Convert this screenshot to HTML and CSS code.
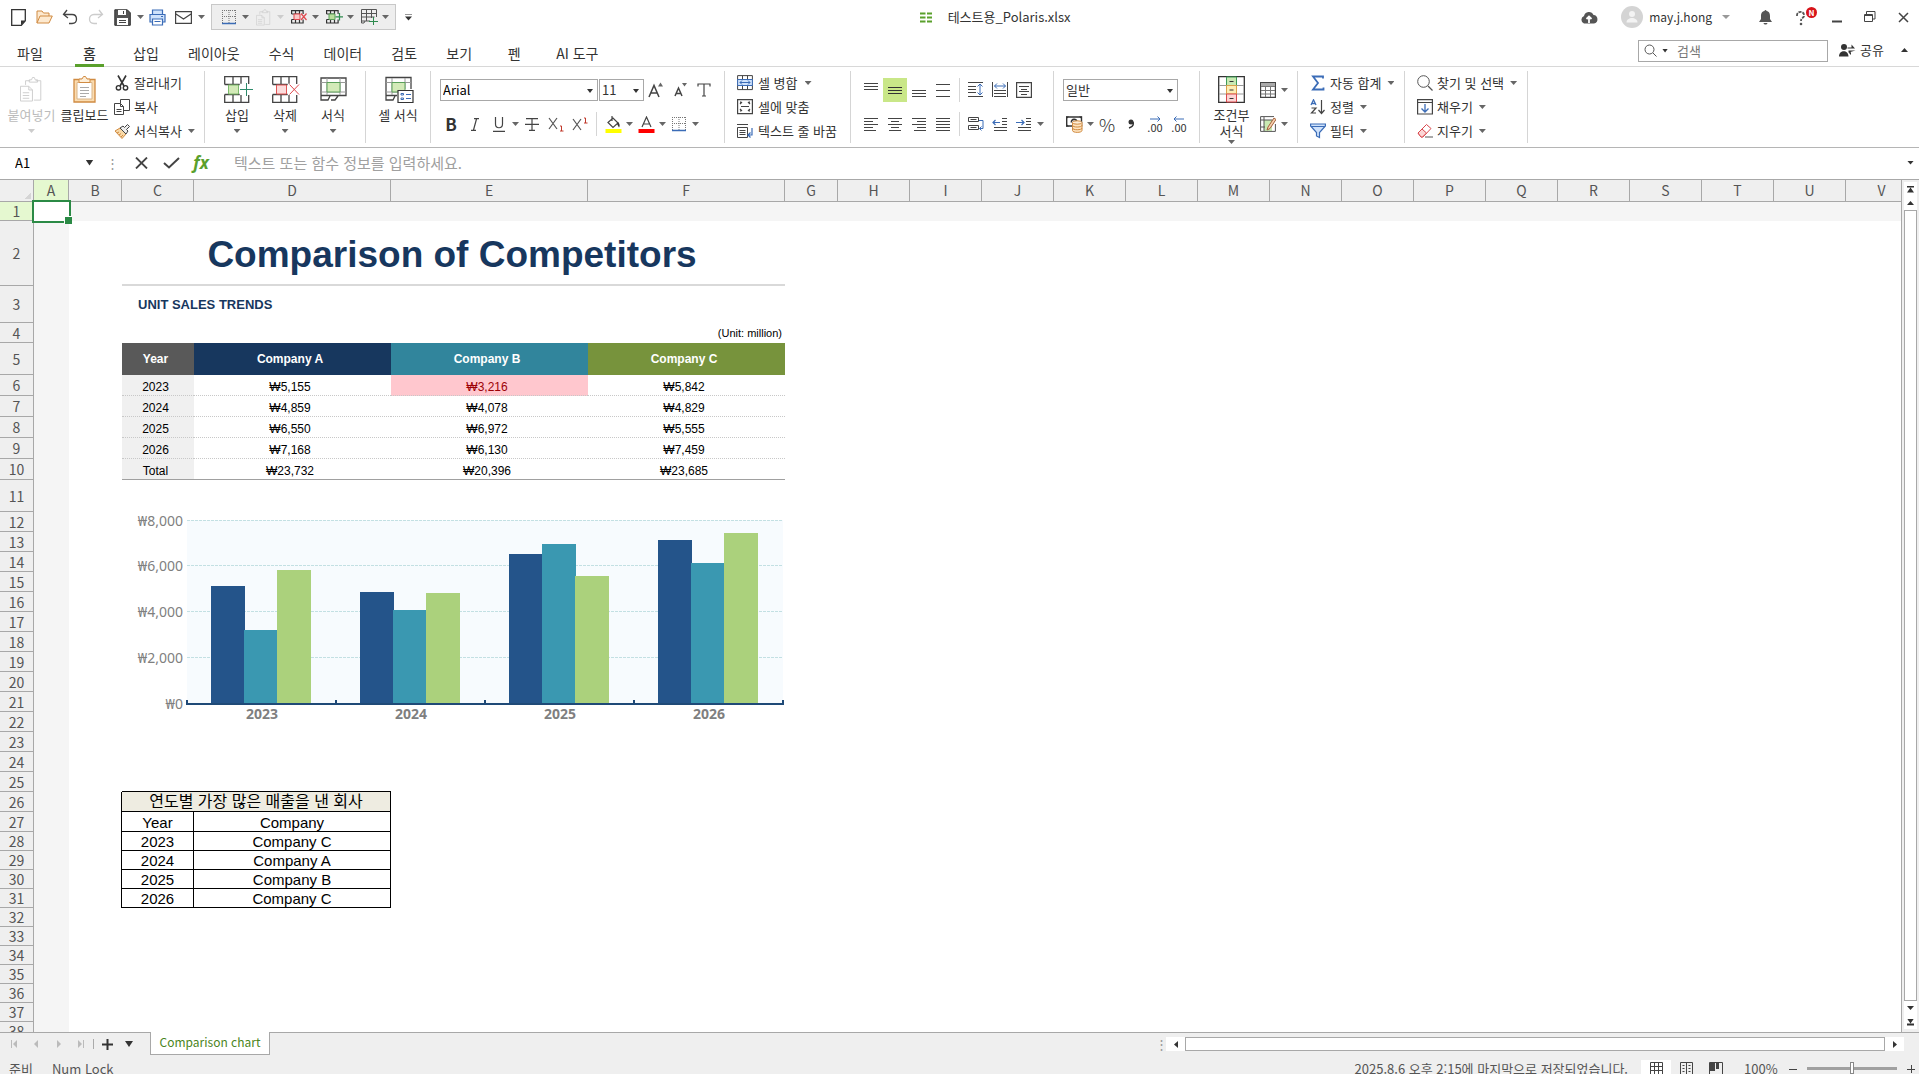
FILE: index.html
```html
<!DOCTYPE html>
<html lang="ko">
<head>
  <meta charset="UTF-8" />
  <meta name="viewport" content="width=device-width, initial-scale=1.0" />
  <title>테스트용_Polaris.xlsx</title>
  <link rel="stylesheet" href="styles.css">
</head>
<body>
  <!-- Shared icons -->
  <svg class="defs" aria-hidden="true">
    <symbol id="i-borders" viewBox="0 0 16 16">
      <path d="M1.5 1v13M8 1v13M14.5 1v13M1 1.5h14M1 7.5h14" stroke="#777" stroke-dasharray="1 1"/>
      <path d="M1 14.5h14" stroke="#3b6cb7" stroke-width="1.5"/>
    </symbol>
    <symbol id="i-paste" viewBox="0 0 26 28">
      <path d="M6 9V4.500h5M17 4.500h5.500v21H15M10 6V3.500h2.500l1-2.500h2l1 2.500H19V6z"/>
      <path d="M.5 10.500h9l4 4v12H.5zM9.500 10.500v4h4M3 17.500h7M3 20.500h7M3 23.500h7"/>
    </symbol>
    <symbol id="i-insert" viewBox="0 0 29 27">
      <path d="M.7 8.500V.7h24V8M.7 8.500h15M9 .7v7.800M17 .7v7M.7 18.500v7.800h24V19M.7 18.500h15M9 18.500v7.800M17 19v7.300" stroke="#444" stroke-width="1.300"/>
      <path d="M4.500 9h10v9h-10z" fill="#d3eab8" stroke="#7cba6b"/>
      <path d="M16 13.500h13M22.500 7v13" stroke="#2e8b6b"/>
    </symbol>
    <symbol id="i-delete" viewBox="0 0 29 27">
      <path d="M.7 8.500V.7h24V8M.7 8.500h15M9 .7v7.800M17 .7v7M.7 18.500v7.800h24V19M.7 18.500h15M9 18.500v7.800M17 19v7.300" stroke="#444" stroke-width="1.300"/>
      <path d="M4.500 9h10v9h-10z" fill="#fcdcdc" stroke="#e05555"/>
      <path d="M17.500 8.500l9.500 10M27 8.500l-9.500 10" stroke="#e0484d"/>
    </symbol>
    <symbol id="i-insert-s" viewBox="0 0 17 14">
      <path d="M.6 4V.6h11.500V4M.6 4h8M4.500.6V4M8.500.6V4M.6 9.500V13h11.500V9.500M.6 9.500h8M4.500 9.500V13M8.500 9.500V13" stroke="#333" stroke-width="1.200"/>
      <path d="M3 4h6v5.500H3z" fill="#b9dd9c" stroke="#5aa05a"/>
      <path d="M9.500 6.800H17M13.500 3v7.500" stroke="#2e8b4e" stroke-width="1.200"/>
    </symbol>
    <symbol id="i-delete-s" viewBox="0 0 17 14">
      <path d="M.6 4V.6h11.500V4M.6 4h8M4.500.6V4M8.500.6V4M.6 9.500V13h11.500V9.500M.6 9.500h8M4.500 9.500V13M8.500 9.500V13" stroke="#333" stroke-width="1.200"/>
      <path d="M3 4h6v5.500H3z" fill="#fcc8c8" stroke="#e0484d"/>
      <path d="M10 3.500l5.500 6.500M15.500 3.500L10 10" stroke="#e0484d" stroke-width="1.200"/>
    </symbol>
  </svg>

  <header class="titlebar">
    <div class="quick">
      <button class="tool" aria-label="새 문서"><svg width="15" height="17" viewBox="0 0 15 17"><path d="M.7.7h13.600v11l-4 4.600H.7z" stroke="#333" stroke-width="1.300"/><path d="M10 16v-4.500h4z" fill="#333"/></svg></button>
      <button class="tool" aria-label="열기"><svg width="17" height="14" viewBox="0 0 17 14"><path d="M1 13V1h5l1.500 2H13v3" fill="#fde9cf" stroke="#d08b42"/><path d="M1 13L4 6h12.300L13 13z" fill="#fde9cf" stroke="#d08b42"/></svg></button>
      <button class="tool" aria-label="실행 취소"><svg width="16" height="16" viewBox="0 0 16 16"><path d="M5 1L1.500 5.500 6 9M1.500 5.500H10c6 0 6 9 0 9H7" stroke="#444" stroke-width="1.300"/></svg></button>
      <button class="tool" aria-label="다시 실행"><svg width="16" height="16" viewBox="0 0 16 16"><path d="M11 1l3.500 4.500L10 9M14.500 5.500H6c-6 0-6 9 0 9h3" stroke="#ccc" stroke-width="1.300"/></svg></button>
      <button class="tool" aria-label="저장"><svg width="17" height="17" viewBox="0 0 17 17"><path d="M.8.8h12.500l3 3v12.500H.8z" fill="#555" stroke="#333"/><path d="M4 1h8v5H4zM3 9h11v7H3z" fill="#fff"/><path d="M9.500 2v3M5 11.500h7M5 13.500h7" stroke="#444"/></svg></button>
      <button class="drop" aria-label="저장 옵션"><i class="caret"></i></button>
      <button class="tool" aria-label="인쇄"><svg width="17" height="17" viewBox="0 0 17 17"><path d="M3.500 5V1h10v4M1 5.500h15v7.500H1z" fill="#cfe2fb" stroke="#3b6cb7" stroke-width="1.200"/><path d="M3.500 10h10v6h-10z" fill="#fff" stroke="#3b6cb7" stroke-width="1.200"/><path d="M5.500 12.500h6M12 7.500h2" stroke="#3b6cb7"/></svg></button>
      <button class="tool" aria-label="메일"><svg width="17" height="13" viewBox="0 0 17 13"><path d="M.6.6h15.800v11.800H.6zM1 3l7.500 5L16 3" stroke="#444" stroke-width="1.200"/></svg></button>
      <button class="drop" aria-label="메일 옵션"><i class="caret"></i></button>
      <div class="recent">
        <button class="tool" aria-label="테두리"><svg width="16" height="16"><use href="#i-borders"/></svg></button>
        <button class="drop" aria-label="테두리 옵션"><i class="caret"></i></button>
        <button class="tool" aria-label="붙여넣기" disabled><svg class="faint" width="16" height="17"><use href="#i-paste"/></svg></button>
        <button class="drop" aria-label="붙여넣기 옵션" disabled><i class="caret"></i></button>
        <button class="tool" aria-label="셀 삭제"><svg width="17" height="14"><use href="#i-delete-s"/></svg></button>
        <button class="drop" aria-label="셀 삭제 옵션"><i class="caret"></i></button>
        <button class="tool" aria-label="셀 삽입"><svg width="17" height="14"><use href="#i-insert-s"/></svg></button>
        <button class="drop" aria-label="셀 삽입 옵션"><i class="caret"></i></button>
        <button class="tool" aria-label="표"><svg width="17" height="16" viewBox="0 0 17 16"><path d="M9 12H.5V.5h15V8M.5 4.500h15M.5 8h13M5.500.5V12M10.500.5V9M4 12l-1 2H.5v-2" stroke="#555"/><path d="M8 12.500h9M12.500 8v8" stroke="#2e8b4e"/></svg></button>
        <button class="drop" aria-label="표 옵션"><i class="caret"></i></button>
      </div>
      <button class="drop custom" aria-label="도구 모음 사용자 지정"><i class="caret barred"></i></button>
    </div>
    <div class="doc">
      <svg width="12" height="11" viewBox="0 0 12 11"><path d="M0 1.500h5.500M7 1.500h5M0 5.500h5.500M7 5.500h5M0 9.500h5.500M7 9.500h5" stroke="#5aa02c" stroke-width="2"/></svg>
      <span>테스트용_Polaris.xlsx</span>
    </div>
    <div class="account">
      <button class="tool" aria-label="클라우드"><svg width="18" height="13" viewBox="0 0 18 13"><path d="M4 12.500a4 4 0 0 1 0-7.500A5 5 0 0 1 13.500 4a4.300 4.300 0 0 1 .5 8.500z" fill="#555"/><path d="M9 12V6M6.500 8L9 5.500 11.500 8" stroke="#fff" stroke-width="1.800"/></svg></button>
      <button class="user"><svg width="22" height="22" viewBox="0 0 22 22"><circle cx="11" cy="11" r="11" fill="#d4d4d4"/><circle cx="11" cy="8" r="3" fill="#f3f3f3"/><path d="M5.500 16.500c0-6 11-6 11 0z" fill="#f3f3f3"/></svg>may.j.hong<i class="caret pale"></i></button>
      <button class="tool" aria-label="알림"><svg width="13" height="15" viewBox="0 0 13 15"><path d="M6.500 0a1 1 0 0 1 1 1c3 .5 3.500 3 3.500 5v3l2 3H0l2-3V6c0-2 .5-4.500 3.500-5a1 1 0 0 1 1-1zM4.500 13h4c-.5 2-3.500 2-4 0z" fill="#555"/></svg></button>
      <button class="tool help" aria-label="도움말"><svg width="18" height="17" viewBox="0 0 18 17"><path d="M1 7c-.5-6 8-5 7 0-.5 2-3 2-3 5" stroke="#555" stroke-width="1.800" stroke-dasharray="3 1"/><circle cx="5" cy="15" r="1.300" fill="#555"/></svg><b class="badge">N</b></button>
      <button class="tool win" aria-label="최소화"><svg width="10" height="11"><path d="M0 9.500h10" stroke="#444" stroke-width="2"/></svg></button>
      <button class="tool win" aria-label="이전 크기로"><svg width="12" height="12"><path d="M.5 3.500h8v7h-8zM.5 4.500h8M2.500 3V.5h8.500V8H9" stroke="#444"/></svg></button>
      <button class="tool win" aria-label="닫기"><svg width="11" height="11"><path d="M1 1l9 9M10 1l-9 9" stroke="#444" stroke-width="1.500"/></svg></button>
    </div>
  </header>

  <nav class="tabs">
    <a class="file" href="#">파일</a>
    <a class="active" href="#">홈</a>
    <a href="#">삽입</a>
    <a href="#">레이아웃</a>
    <a href="#">수식</a>
    <a href="#">데이터</a>
    <a href="#">검토</a>
    <a href="#">보기</a>
    <a href="#">펜</a>
    <a href="#">AI 도구</a>
    <div class="search">
      <svg width="13" height="13" viewBox="0 0 13 13"><circle cx="5.500" cy="5.500" r="4.500" stroke="#555"/><path d="M9 9l3.500 3.500" stroke="#555"/></svg>
      <i class="caret dark"></i>
      <input type="text" placeholder="검색" aria-label="검색">
    </div>
    <button class="share"><svg width="17" height="13" viewBox="0 0 17 13"><circle cx="5" cy="3" r="3" fill="#333"/><path d="M0 12.500c0-7 9.500-7 9.500 0zM8.500 3.500h4V.5L16 4.500H8.500zM16.500 6.500h-7v1.800H12V11l-2.500-2.500z" fill="#333"/></svg>공유</button>
    <button class="drop fold" aria-label="리본 접기"><i class="caret up dark"></i></button>
  </nav>

  <section class="ribbon">
    <div class="group g-clip">
      <button class="big" disabled><svg class="faint" width="24" height="27"><use href="#i-paste"/></svg>붙여넣기<i class="caret"></i></button>
      <button class="big"><svg width="23" height="27" viewBox="0 0 23 27"><path d="M1 3.500h21V26H1z" fill="#fbdcb0" stroke="#d08b42" stroke-width="1.300"/><path d="M4 6.500h15V23H4z" fill="#fff" stroke="#d8b58a"/><path d="M6 6.500V3h3l1.500-2.500h2L14 3h3v3.500z" fill="#fdeed8" stroke="#d08b42"/><path d="M7 11.500h9M7 14.500h9M7 17.500h9M7 20.500h6" stroke="#aaa"/></svg>클립보드</button>
      <div class="stack">
        <button class="small"><svg width="16" height="16" viewBox="0 0 16 16"><path d="M4 .5l6 10.500M12 .5L6 11" stroke="#333" stroke-width="1.600"/><circle cx="4.500" cy="12.800" r="2.200" stroke="#333" stroke-width="1.400"/><circle cx="11.500" cy="12.800" r="2.200" stroke="#333" stroke-width="1.400"/></svg>잘라내기</button>
        <button class="small"><svg width="16" height="16" viewBox="0 0 16 16"><path d="M6.500 4V.5h9v11H10" stroke="#444"/><path d="M.5 4.500h6l3 3v8h-9zM6.500 4.500v3h3M2.500 10.500h5M2.500 12.500h5" stroke="#444"/></svg>복사</button>
        <button class="small"><svg width="16" height="15" viewBox="0 0 16 15"><path d="M1 7l5-3 6 6-4 4.500z" fill="#f8d9a8" stroke="#d08b42"/><path d="M3 9l2-1M5 11l2-1.500M7 13l2-2" stroke="#d08b42"/><path d="M6 4l3-2 1.500 1.500L13.500.5l2 2-3 3L14 7l-2 3z" fill="#eee" stroke="#444"/></svg>서식복사<i class="caret"></i></button>
      </div>
    </div>

    <div class="group g-cells">
      <button class="big"><svg class="wide" width="29" height="27"><use href="#i-insert"/></svg>삽입<i class="caret"></i></button>
      <button class="big"><svg class="wide" width="29" height="27"><use href="#i-delete"/></svg>삭제<i class="caret"></i></button>
      <button class="big"><svg width="27" height="27" viewBox="0 0 27 27"><path d="M1 19.500V2h25v17.500H1M1 19v5h7l2-4M11 24h4l3-4" stroke="#444" stroke-width="1.300"/><path d="M7 2v17M20 2v17M1 6.500h25M1 16h25" stroke="#999"/><path d="M7 6.500h13V16H7z" fill="#d3eab8" stroke="#5aa05a"/></svg>서식<i class="caret"></i></button>
    </div>

    <div class="group g-format">
      <button class="big"><svg class="wide" width="29" height="27" viewBox="0 0 29 27"><path d="M1 19.500V1.500h25V13M1 19.500h11M1 19v5h7l2-4" stroke="#444" stroke-width="1.300"/><path d="M7 2v17M20 2v11M1 6.500h25M1 16h11" stroke="#999"/><path d="M7 6.500h13V16H7z" fill="#d3eab8" stroke="#5aa05a"/><path d="M13 14.500h15V26.500H13z" fill="#fff" stroke="#333" stroke-width="1.200"/><path d="M16 17.500h2.500V19H16zM16 22h2.500v1.500H16zM21 18.500h5M21 22.500h5" stroke="#3b6cb7"/></svg>셀 서식</button>
    </div>

    <div class="group g-font rows">
      <div class="row">
        <label class="pick font-name"><select aria-label="글꼴"><option>Arial</option></select><i class="caret dark"></i></label>
        <label class="pick font-size"><select aria-label="글꼴 크기"><option>11</option></select><i class="caret dark"></i></label>
        <button class="tool" aria-label="글꼴 크게"><svg width="16" height="16" viewBox="0 0 16 16"><path d="M1 15L6 3.500 11 15M3 11h6" stroke="#444" stroke-width="1.500"/><path d="M10 4.500l2.500-4 2.500 4z" fill="#666"/></svg></button>
        <button class="tool" aria-label="글꼴 작게"><svg width="16" height="16" viewBox="0 0 16 16"><path d="M3 14L6.500 6 10 14M4 11.500h5" stroke="#444" stroke-width="1.500"/><path d="M10 1l2.500 3.500L15 1z" fill="#666"/></svg></button>
        <button class="tool" aria-label="서식 지우기"><svg width="14" height="14" viewBox="0 0 14 14"><path d="M1 3.500V1h12v2.500M7 1v12M5 13h4" stroke="#444" stroke-width="1.200"/></svg></button>
      </div>
      <div class="row">
        <button class="tool bold">B</button>
        <button class="tool italic" aria-label="기울임"><svg width="10" height="13"><path d="M4 .6h5M1 12.400h5M6.500 1L3.500 12" stroke="#444" stroke-width="1.200"/></svg></button>
        <button class="tool" aria-label="밑줄"><svg width="12" height="15"><path d="M2.500 0v7c0 5 7 5 7 0V0M0 14.400h12" stroke="#444" stroke-width="1.200"/></svg></button>
        <button class="drop" aria-label="밑줄 옵션"><i class="caret"></i></button>
        <button class="tool" aria-label="취소선"><svg width="14" height="13"><path d="M1 .6h12M7 1v11.500M4 12.400h6M0 6.400h14" stroke="#444" stroke-width="1.200"/></svg></button>
        <button class="tool" aria-label="아래 첨자"><svg width="16" height="16"><path d="M1 2l8 11M9 2L1 13" stroke="#555" stroke-width="1.200"/><path d="M12 10h1.500v5M12 15h3.500" stroke="#c0392b"/></svg></button>
        <button class="tool" aria-label="위 첨자"><svg width="16" height="16"><path d="M1 3l8 11M9 3L1 14" stroke="#555" stroke-width="1.200"/><path d="M12 2h1.500v5M12 7h3.500" stroke="#c0392b"/></svg></button>
        <span class="sep"></span>
        <button class="tool" aria-label="채우기 색"><svg width="17" height="17" viewBox="0 0 17 17"><path d="M3 6.500L8 2l5 5-5 4.500zM7 0v5" stroke="#444" stroke-width="1.200"/><path d="M13 6c2 2 2 4 1 5.500L12 8z" fill="#333"/><path d="M.5 13h16v4H.5z" fill="#ff0"/></svg></button>
        <button class="drop" aria-label="채우기 색 옵션"><i class="caret"></i></button>
        <button class="tool" aria-label="글꼴 색"><svg width="17" height="17" viewBox="0 0 17 17"><path d="M4 11L8.500 1 13 11M5.500 8h6" stroke="#444" stroke-width="1.200"/><path d="M.5 13h16v4H.5z" fill="red"/></svg></button>
        <button class="drop" aria-label="글꼴 색 옵션"><i class="caret"></i></button>
        <button class="tool" aria-label="테두리"><svg width="16" height="16"><use href="#i-borders"/></svg></button>
        <button class="drop" aria-label="테두리 옵션"><i class="caret"></i></button>
      </div>
    </div>

    <div class="group g-merge">
      <div class="stack">
        <button class="small"><svg width="16" height="16" viewBox="0 0 16 16"><path d="M.6 .6h14.800v14H.6zM5.500.6v14M10.500.6v14" stroke="#444"/><path d="M.6 4.500h14.800v6H.6z" fill="#cfe2fb" stroke="#3b6cb7"/><path d="M3 7.500h10M5 5.500l-2 2 2 2M11 5.500l2 2-2 2" stroke="#3b6cb7"/></svg>셀 병합<i class="caret"></i></button>
        <button class="small"><svg width="16" height="16" viewBox="0 0 16 16"><path d="M.6.6h14.800v14H.6zM4 7.500h8M3 5l2-2M13 5l-2-2M3 10l2 2M13 10l-2 2M3 3h1M12 3h1M3 12h1M12 12h1" stroke="#444" stroke-width="1.200"/></svg>셀에 맞춤</button>
        <button class="small"><svg width="16" height="16" viewBox="0 0 16 16"><path d="M0 1.500h11M.5 4.500h10v10H.5zM2.500 7.500h6M2.500 9.500h6M2.500 11.500h6" stroke="#444"/><path d="M15 5v7h-3.500M13.500 9.500L11 12l2.500 2.500" stroke="#3b6cb7" stroke-width="1.200"/></svg>텍스트 줄 바꿈</button>
      </div>
    </div>

    <div class="group g-align rows">
      <div class="row">
        <button class="tool" aria-label="위쪽 맞춤"><svg width="14" height="14"><path d="M0 .5h14M0 3.500h14M0 6.500h14" stroke="#444"/></svg></button>
        <button class="tool on" aria-label="가운데 맞춤"><svg width="14" height="14"><path d="M0 4.500h14M0 7.500h14M0 10.500h14" stroke="#333"/></svg></button>
        <button class="tool" aria-label="아래쪽 맞춤"><svg width="14" height="14"><path d="M0 7.500h14M0 10.500h14M0 13.500h14" stroke="#444"/></svg></button>
        <button class="tool" aria-label="균등 맞춤"><svg width="14" height="14"><path d="M0 1.500h14M0 7.500h14M0 13.500h14" stroke="#444"/></svg></button>
        <span class="sep"></span>
        <button class="tool" aria-label="줄 간격"><svg width="16" height="16"><path d="M0 .5h15M0 4.500h8M0 7.500h8M0 10.500h8M0 14.500h15" stroke="#444"/><path d="M12 2v11M9.500 4.500L12 2l2.500 2.500M9.500 10.500L12 13l2.500-2.500" stroke="#3b6cb7"/></svg></button>
        <button class="tool" aria-label="너비 맞춤"><svg width="16" height="16"><path d="M.5 0v15M15.500 0v15M2 8.500h12M2 11.500h12M2 14.500h12" stroke="#444"/><path d="M2.500 4h11M5 1.500L2.500 4 5 6.500M11 1.500L13.500 4 11 6.500" stroke="#3b6cb7"/></svg></button>
        <button class="tool" aria-label="여백"><svg width="16" height="16"><path d="M.6.6h14.800v14.800H.6zM3 4.500h10M5 7.500h6M3 9.500h10M5 12.500h6" stroke="#444" stroke-width="1.200"/></svg></button>
      </div>
      <div class="row">
        <button class="tool" aria-label="왼쪽"><svg width="14" height="14"><path d="M0 1.500h14M0 4.500h9M0 7.500h14M0 10.500h9M0 13.500h12" stroke="#444"/></svg></button>
        <button class="tool" aria-label="가운데"><svg width="14" height="14"><path d="M0 1.500h14M3 4.500h8M0 7.500h14M3 10.500h8M1 13.500h12" stroke="#444"/></svg></button>
        <button class="tool" aria-label="오른쪽"><svg width="14" height="14"><path d="M0 1.500h14M5 4.500h9M0 7.500h14M5 10.500h9M2 13.500h12" stroke="#444"/></svg></button>
        <button class="tool" aria-label="양쪽"><svg width="14" height="14"><path d="M0 1.500h14M0 4.500h14M0 7.500h14M0 10.500h14M0 13.500h14" stroke="#444"/></svg></button>
        <span class="sep"></span>
        <button class="tool" aria-label="텍스트 방향"><svg width="16" height="16"><path d="M.5 1.500h10v4H.5zM.5 9.500h10v4H.5zM2.500 3.500h6M2.500 11.500h6" stroke="#444"/><path d="M11 4.500h4v8h-3.500M13.500 10.500l-2 2 2 2" stroke="#3b6cb7"/></svg></button>
        <button class="tool" aria-label="내어쓰기"><svg width="16" height="14"><path d="M10 1.500h5M10 4.500h5M10 7.500h5M2 10.500h13M2 13.500h13" stroke="#444"/><path d="M1 5.500h7M3.500 3L1 5.500 3.500 8" stroke="#3b6cb7" stroke-width="1.200"/></svg></button>
        <button class="tool" aria-label="들여쓰기"><svg width="16" height="14"><path d="M10 1.500h5M10 4.500h5M10 7.500h5M2 10.500h13M2 13.500h13" stroke="#444"/><path d="M0 5.500h8M5.500 3L8 5.500 5.500 8" stroke="#3b6cb7" stroke-width="1.200"/></svg></button>
        <button class="drop" aria-label="들여쓰기 옵션"><i class="caret"></i></button>
      </div>
    </div>

    <div class="group g-number rows">
      <div class="row">
        <label class="pick number-format"><select aria-label="표시 형식"><option>일반</option></select><i class="caret dark"></i></label>
      </div>
      <div class="row">
        <button class="tool" aria-label="통화"><svg width="17" height="17" viewBox="0 0 17 17"><path d="M.7 1h14.800v9H.7z" fill="#fff" stroke="#333" stroke-width="1.400"/><path d="M0 .5h3l-3 3zM16 .5h-3l3 3zM0 10.500h3l-3-3z" fill="#333"/><path d="M5.500 6.500c-1-4 6-4 5-1" stroke="#333" stroke-width="1.600"/><path d="M6.500 6.500v8c0 2.500 9.500 2.500 9.500 0v-8" fill="#fde3bf" stroke="#d08b42"/><ellipse cx="11.200" cy="6.500" rx="4.700" ry="1.700" fill="#fdeed8" stroke="#d08b42"/><path d="M6.500 9.300c0 2.300 9.500 2.300 9.500 0M6.500 12c0 2.300 9.500 2.300 9.500 0" stroke="#d08b42"/></svg></button>
        <button class="drop" aria-label="통화 옵션"><i class="caret"></i></button>
        <button class="tool percent">%</button>
        <button class="tool" aria-label="쉼표"><svg width="6" height="10"><circle cx="3" cy="3" r="2.500" fill="#333"/><path d="M5 3c1 3-1 5-4 6" stroke="#333" stroke-width="1.400"/></svg></button>
        <button class="tool decimal"><svg width="12" height="6"><path d="M1 3h10M8.500.5L11 3 8.500 5.500" stroke="#3b6cb7"/></svg>.00</button>
        <button class="tool decimal"><svg width="12" height="6"><path d="M1 3h10M3.500.5L1 3l2.500 2.500" stroke="#3b6cb7"/></svg>.00</button>
      </div>
    </div>

    <div class="group g-style">
      <button class="big"><svg width="27" height="27" viewBox="0 0 27 27"><path d="M.7.7h25.600v25.600H.7z" stroke="#333" stroke-width="1.300"/><path d="M1 9.500h25M1 18h25" stroke="#999"/><path d="M8.500 1h10v8.500h-10z" fill="#c9eab3" stroke="#3f9a58"/><path d="M8.500 9.500h10V18h-10z" fill="#fdeeb5" stroke="#dba04a"/><path d="M8.500 18h10v8h-10z" fill="#fcd5d5" stroke="#d9484d"/><path d="M11.500 5.500h4M11.500 14h4M11.500 22.500h4" stroke="#333"/></svg>조건부<br>서식<i class="caret"></i></button>
      <div class="rows">
        <div class="row">
          <button class="tool" aria-label="표 서식"><svg width="16" height="16"><path d="M.6.6h14.800v14.800H.6z" stroke="#444" stroke-width="1.200"/><path d="M1 1h14v3H1z" fill="#aaa"/><path d="M1 4.500h14M1 8.500h14M1 12h14M5.500 4v11M10.500 4v11" stroke="#777"/></svg></button>
          <button class="drop" aria-label="표 서식 옵션"><i class="caret"></i></button>
        </div>
        <div class="row">
          <button class="tool" aria-label="셀 스타일"><svg width="16" height="16"><path d="M4 4h8v11H4z" fill="#c9eab3"/><path d="M14 .6H.6v14.800h14.800V8M.6 4h12M4 1v14M1 11h4" stroke="#555"/><path d="M7 14l1-3 6-9 2 1.500-6 9z" fill="#f6cfae" stroke="#a5603a"/></svg></button>
          <button class="drop" aria-label="셀 스타일 옵션"><i class="caret"></i></button>
        </div>
      </div>
    </div>

    <div class="group g-calc">
      <div class="stack">
        <button class="small"><svg width="16" height="16"><path d="M13 3.500V1.500H3L8 8l-5 6.500h10.500v-2" stroke="#3b6cb7" stroke-width="1.800"/></svg>자동 합계<i class="caret"></i></button>
        <button class="small"><svg width="16" height="16"><path d="M1 6L3.500.8 6 6M2 4.500h3" stroke="#3b6cb7" stroke-width="1.300"/><path d="M1.500 9H6l-4.500 5H6M11.500 1v13M8.500 11l3 3.500 3-3.500" stroke="#444" stroke-width="1.200"/></svg>정렬<i class="caret"></i></button>
        <button class="small"><svg width="16" height="16"><path d="M.6 1h14.800v2L9.500 9.500v5l-3-1.500V9.500L.6 3z" fill="#cfe2fb" stroke="#3b6cb7" stroke-width="1.200"/><path d="M1 3.500h14" stroke="#3b6cb7"/></svg>필터<i class="caret"></i></button>
      </div>
    </div>

    <div class="group g-find">
      <div class="stack">
        <button class="small"><svg width="16" height="16"><circle cx="6.500" cy="6.500" r="5.800" stroke="#555"/><path d="M11 11l4.500 4.500" stroke="#555" stroke-width="1.200"/></svg>찾기 및 선택<i class="caret"></i></button>
        <button class="small"><svg width="16" height="16"><path d="M.6.6h14.800v14.400H.6zM1 3.500h14" stroke="#444" stroke-width="1.200"/><path d="M8 5v8M4.500 9.500L8 13l3.500-3.500" stroke="#3b6cb7" stroke-width="1.300"/></svg>채우기<i class="caret"></i></button>
        <button class="small"><svg width="16" height="16"><path d="M1 10L9.500 1.500l4.500 4-8 8.500H4z" stroke="#d9484d"/><path d="M1 10l4-4 4.500 4-4 4H4z" fill="#fcd5d5" stroke="#d9484d"/><path d="M8 14h8" stroke="#555"/></svg>지우기<i class="caret"></i></button>
      </div>
    </div>
  </section>

  <div class="formula">
    <input class="name-box" type="text" value="A1" aria-label="이름 상자">
    <button class="drop" aria-label="이름 목록"><i class="caret big-caret"></i></button>
    <span class="dots">⋮</span>
    <button class="tool" aria-label="취소"><svg width="13" height="12"><path d="M1 .5l11 11M12 .5L1 11.500" stroke="#444" stroke-width="1.800"/></svg></button>
    <button class="tool" aria-label="입력"><svg width="17" height="12"><path d="M1 6l5 4.500L16 1" stroke="#444" stroke-width="2"/></svg></button>
    <button class="tool fx">fx</button>
    <input class="formula-input" type="text" placeholder="텍스트 또는 함수 정보를 입력하세요." aria-label="수식 입력">
    <button class="drop" aria-label="수식 입력줄 확장"><i class="caret dark"></i></button>
  </div>

  <main class="work">
    <div class="sheet">
      <table class="grid">
        <colgroup>
          <col class="c-head"><col class="c-a"><col class="c-s"><col class="c-m"><col class="c-l"><col class="c-l"><col class="c-l"><col class="c-s">
          <col class="c-m" span="15">
        </colgroup>
        <thead>
          <tr class="h22">
            <th class="corner"></th><th class="sel">A</th><th>B</th><th>C</th><th>D</th><th>E</th><th>F</th><th>G</th><th>H</th><th>I</th><th>J</th><th>K</th><th>L</th><th>M</th><th>N</th><th>O</th><th>P</th><th>Q</th><th>R</th><th>S</th><th>T</th><th>U</th><th>V</th>
          </tr>
        </thead>
        <tbody>
          <tr><th class="sel">1</th><td class="cursor"></td><td class="edge" colspan="21"></td></tr>
          <tr class="h65"><th>2</th><td class="edge"></td><td></td><td class="title" colspan="4">Comparison of Competitors</td></tr>
          <tr class="h37"><th>3</th><td class="edge"></td><td></td><td class="subtitle" colspan="4">UNIT SALES TRENDS</td></tr>
          <tr class="h20"><th>4</th><td class="edge"></td><td></td><td class="unit" colspan="4">(Unit: million)</td></tr>
          <tr class="h32 heads"><th>5</th><td class="edge"></td><td></td><td class="year">Year</td><td class="co-a">Company A</td><td class="co-b">Company B</td><td class="co-c">Company C</td></tr>
          <tr class="h21 data"><th>6</th><td class="edge"></td><td></td><td class="key">2023</td><td>₩5,155</td><td class="low">₩3,216</td><td>₩5,842</td></tr>
          <tr class="h21 data"><th>7</th><td class="edge"></td><td></td><td class="key">2024</td><td>₩4,859</td><td>₩4,078</td><td>₩4,829</td></tr>
          <tr class="h21 data"><th>8</th><td class="edge"></td><td></td><td class="key">2025</td><td>₩6,550</td><td>₩6,972</td><td>₩5,555</td></tr>
          <tr class="h21 data"><th>9</th><td class="edge"></td><td></td><td class="key">2026</td><td>₩7,168</td><td>₩6,130</td><td>₩7,459</td></tr>
          <tr class="h21 data total"><th>10</th><td class="edge"></td><td></td><td class="key">Total</td><td>₩23,732</td><td>₩20,396</td><td>₩23,685</td></tr>
          <tr class="h32"><th>11</th><td class="edge"></td></tr>
          <tr class="h20"><th>12</th><td class="edge"></td><td rowspan="13"></td>
            <td class="chart-cell" colspan="4" rowspan="13">
              <svg class="chart" viewBox="0 0 663 240" width="663" height="240" role="img" aria-label="Unit sales trends">
                <rect x="65" y="8" width="596" height="183" fill="#f7fbfe"/>
                <g stroke="#c3e0e3" stroke-dasharray="3 1">
                  <path d="M65 8.500h596M65 53.500h596M65 99.500h596M65 145.500h596"/>
                </g>
                <g fill="#24548a">
                  <rect x="89" y="74" width="34" height="118"/><rect x="238" y="80" width="34" height="112"/><rect x="387" y="42" width="34" height="150"/><rect x="536" y="28" width="34" height="164"/>
                </g>
                <g fill="#3a98b1">
                  <rect x="122" y="118" width="33" height="74"/><rect x="271" y="98" width="33" height="94"/><rect x="420" y="32" width="34" height="160"/><rect x="569" y="51" width="33" height="141"/>
                </g>
                <g fill="#abd17c">
                  <rect x="155" y="58" width="34" height="134"/><rect x="304" y="81" width="34" height="111"/><rect x="453" y="64" width="34" height="128"/><rect x="602" y="21" width="34" height="171"/>
                </g>
                <path d="M65 188v4h596v-4M214 188v4M363 188v4M512 188v4" stroke="#1f4a77" stroke-width="2"/>
                <g class="axis-y">
                  <text x="61" y="14">₩8,000</text><text x="61" y="59">₩6,000</text><text x="61" y="105">₩4,000</text><text x="61" y="151">₩2,000</text><text x="61" y="197">₩0</text>
                </g>
                <g class="axis-x">
                  <text x="140" y="207">2023</text><text x="289" y="207">2024</text><text x="438" y="207">2025</text><text x="587" y="207">2026</text>
                </g>
              </svg>
            </td>
          </tr>
          <tr class="h20"><th>13</th><td class="edge"></td></tr>
          <tr class="h20"><th>14</th><td class="edge"></td></tr>
          <tr class="h20"><th>15</th><td class="edge"></td></tr>
          <tr class="h20"><th>16</th><td class="edge"></td></tr>
          <tr class="h20"><th>17</th><td class="edge"></td></tr>
          <tr class="h20"><th>18</th><td class="edge"></td></tr>
          <tr class="h20"><th>19</th><td class="edge"></td></tr>
          <tr class="h20"><th>20</th><td class="edge"></td></tr>
          <tr class="h20"><th>21</th><td class="edge"></td></tr>
          <tr class="h20"><th>22</th><td class="edge"></td></tr>
          <tr class="h20"><th>23</th><td class="edge"></td></tr>
          <tr class="h20"><th>24</th><td class="edge"></td></tr>
          <tr class="h20"><th>25</th><td class="edge"></td><td></td><td class="line-b" colspan="2"></td></tr>
          <tr class="h20 best"><th>26</th><td class="edge"></td><td class="line-r"></td><td class="best-title" colspan="2">연도별 가장 많은 매출을 낸 회사</td></tr>
          <tr class="h20 best"><th>27</th><td class="edge"></td><td class="line-r"></td><td class="cell">Year</td><td class="cell">Company</td></tr>
          <tr class="best"><th>28</th><td class="edge"></td><td class="line-r"></td><td class="cell">2023</td><td class="cell">Company C</td></tr>
          <tr class="best"><th>29</th><td class="edge"></td><td class="line-r"></td><td class="cell">2024</td><td class="cell">Company A</td></tr>
          <tr class="best"><th>30</th><td class="edge"></td><td class="line-r"></td><td class="cell">2025</td><td class="cell">Company B</td></tr>
          <tr class="best"><th>31</th><td class="edge"></td><td class="line-r"></td><td class="cell">2026</td><td class="cell">Company C</td></tr>
          <tr><th>32</th><td class="edge"></td></tr>
          <tr><th>33</th><td class="edge"></td></tr>
          <tr><th>34</th><td class="edge"></td></tr>
          <tr><th>35</th><td class="edge"></td></tr>
          <tr><th>36</th><td class="edge"></td></tr>
          <tr><th>37</th><td class="edge"></td></tr>
          <tr><th>38</th><td class="edge"></td></tr>
        </tbody>
      </table>
    </div>
    <div class="vscroll">
      <button aria-label="맨 위로"><i class="caret up dark over"></i></button>
      <button aria-label="위로"><i class="caret up dark"></i></button>
      <div class="thumb"></div>
      <button aria-label="아래로"><i class="caret dark"></i></button>
      <button aria-label="맨 아래로"><i class="caret dark under"></i></button>
    </div>
  </main>

  <footer>
    <div class="sheetbar">
      <div class="sheet-nav">
        <button aria-label="첫 시트" disabled><svg width="7" height="8"><path d="M.5 0v8" stroke="#bbb"/><path d="M6 0v8L2 4z" fill="#bbb"/></svg></button>
        <button aria-label="이전 시트" disabled><svg width="7" height="8"><path d="M5 0v8L1 4z" fill="#bbb"/></svg></button>
        <button aria-label="다음 시트" disabled><svg width="7" height="8"><path d="M2 0v8l4-4z" fill="#bbb"/></svg></button>
        <button aria-label="마지막 시트" disabled><svg width="7" height="8"><path d="M6.500 0v8" stroke="#bbb"/><path d="M1 0v8l4-4z" fill="#bbb"/></svg></button>
        <span class="bar"></span>
        <button aria-label="시트 추가"><svg width="11" height="11"><path d="M0 5.500h11M5.500 0v11" stroke="#333" stroke-width="2"/></svg></button>
        <button aria-label="시트 목록"><i class="caret big-caret"></i></button>
      </div>
      <a class="sheet-tab" href="#">Comparison chart</a>
      <div class="hscroll">
        <span class="dots">⋮</span>
        <button aria-label="왼쪽으로"><svg width="4" height="7"><path d="M4 0v7L0 3.500z" fill="#333"/></svg></button>
        <div class="thumb"></div>
        <button aria-label="오른쪽으로"><svg width="4" height="7"><path d="M0 0v7l4-3.500z" fill="#333"/></svg></button>
      </div>
    </div>
    <div class="status">
      <span class="ready">준비</span>
      <span>Num Lock</span>
      <span class="saved">2025.8.6 오후 2:15에 마지막으로 저장되었습니다.</span>
      <div class="views">
        <button class="on" aria-label="기본 보기"><svg width="13" height="13"><path d="M.5.5h12v12H.5zM.5 4.500h12M.5 8.500h12M4.500.5v12M8.500.5v12" stroke="#444"/></svg></button>
        <button aria-label="페이지 레이아웃"><svg width="13" height="13"><path d="M.5.5h12v12H.5zM6.500.5v12M2.500 3.500h2M2.500 6.500h2M2.500 9.500h2M8.500 3.500h2M8.500 6.500h2M8.500 9.500h2" stroke="#444"/></svg></button>
        <button aria-label="페이지 나누기"><svg width="14" height="13"><path d="M.5.5h13v12H.5z" stroke="#444"/><path d="M1 1h5v8H1zM7 1h3v6H7z" fill="#444"/></svg></button>
      </div>
      <span class="percent-now">100%</span>
      <button class="step" aria-label="축소"><svg width="8" height="8"><path d="M0 4.500h8" stroke="#444"/></svg></button>
      <input class="zoom" type="range" min="0" max="200" value="100" aria-label="확대/축소">
      <button class="step" aria-label="확대"><svg width="8" height="8"><path d="M0 4.500h8M4.500 0v8" stroke="#444"/></svg></button>
    </div>
  </footer>
</body>
</html>
```

FILE: styles.css
```css
* {
  box-sizing: border-box;
}

body {
  margin: 0;
  height: 100vh;
  overflow: hidden;
  display: flex;
  flex-direction: column;
  font-family: "Noto Sans CJK KR", sans-serif;
  font-size: 13px;
  line-height: 16px;
  color: #333;
  background: #fff;
}

svg {
  fill: none;
  flex: none;
  display: block;
}

.defs {
  width: 0;
  height: 0;
  position: absolute;
}

.faint {
  stroke: #ccc;
}

button,
input,
select {
  font: inherit;
  color: inherit;
  background: none;
  border: 0;
  padding: 0;
  margin: 0;
  outline: none;
}

a {
  color: inherit;
  text-decoration: none;
}

/* Triangles */
.caret {
  flex: none;
  display: block;
  width: 7px;
  height: 4px;
  background: #666;
  clip-path: polygon(0 0, 100% 0, 50% 100%);
}

.caret.dark { background: #333; }
.caret.pale { background: #999; width: 8px; }
.caret.up { clip-path: polygon(50% 0, 100% 100%, 0 100%); }
.big-caret { width: 8px; height: 6px; background: #333; }
:disabled .caret { background: #ccc; }

.caret.barred,
.caret.over {
  height: 7px;
  clip-path: polygon(0 0, 100% 0, 100% 1px, 0 1px, 0 3px, 100% 3px, 50% 100%, 0 3px);
  background: #333;
}

.caret.over {
  clip-path: polygon(0 0, 100% 0, 100% 2px, 50% 2px, 100% 100%, 0 100%, 50% 2px, 0 2px);
}

.caret.under {
  height: 7px;
  clip-path: polygon(0 0, 100% 0, 50% 5px, 100% 5px, 100% 100%, 0 100%, 0 5px, 50% 5px);
}

.tool {
  width: 24px;
  height: 24px;
  flex: none;
  display: flex;
  align-items: center;
  justify-content: center;
}

.tool.on { background: #c9e788; }

.drop {
  width: 9px;
  height: 24px;
  flex: none;
  display: flex;
  align-items: center;
  justify-content: center;
}

/* Title bar */
.titlebar {
  height: 34px;
  flex: none;
  display: flex;
  align-items: center;
}

.quick,
.recent,
.account,
.doc,
.user {
  display: flex;
  align-items: center;
}

.quick { padding-left: 6px; }
.quick > .tool { margin-right: 2px; }

.recent {
  height: 26px;
  padding: 0 4px;
  margin-left: 5px;
  background: #eee;
  border: 1px solid #c8c8c8;
}

.recent .tool { margin-left: 1px; }
.recent .drop { margin-right: 1px; }
.custom { margin-left: 8px; }

.doc {
  flex: 1;
  justify-content: center;
  gap: 16px;
}

.account { padding-right: 4px; }
.user { gap: 6px; margin: 0 23px 0 20px; font-size: 12px; }
.user .caret { margin-left: 4px; }
.help { position: relative; margin: 0 8px 0 16px; }
.win { margin-left: 9px; }
.account .help + .win { margin-left: 0; }

.badge {
  position: absolute;
  top: 2px;
  right: 0;
  width: 11px;
  height: 11px;
  border-radius: 50%;
  background: #d7141a;
  color: #fff;
  font-size: 8px;
  line-height: 11px;
  text-align: center;
}

/* Menu tabs */
.tabs {
  height: 33px;
  flex: none;
  display: flex;
  align-items: center;
  gap: 1px;
  border-bottom: 1px solid #d8d8d8;
}

.tabs a {
  min-width: 54px;
  height: 33px;
  padding: 0 14px;
  font-size: 14px;
  line-height: 38px;
  text-align: center;
}

.tabs .file { width: 60px; }

.tabs .active {
  width: 57px;
  font-weight: 500;
  background: linear-gradient(#5aa02c, #5aa02c) center bottom / 29px 3px no-repeat;
}

.search {
  width: 190px;
  height: 22px;
  margin: 1px 10px 0 auto;
  padding: 0 5px;
  border: 1px solid #a8a8a8;
  display: flex;
  align-items: center;
  gap: 5px;
}

.search .caret { width: 6px; }
.search input { width: 100px; margin-left: 4px; }
.search input::placeholder { color: #777; }

.share {
  display: flex;
  align-items: center;
  gap: 4px;
}

.fold { margin: 0 10px 0 15px; }

/* Ribbon */
.ribbon {
  height: 81px;
  flex: none;
  display: flex;
  padding: 4px 0;
  border-bottom: 1px solid #b5b5b5;
}

.group {
  display: flex;
  height: 72px;
  flex: none;
  border-right: 1px solid #d5d5d5;
}

.g-clip { width: 205px; padding-left: 5px; }
.g-cells { width: 161px; padding-left: 8px; }
.g-format { width: 65px; padding-left: 7px; }
.g-font { width: 294px; padding-left: 8px; }
.g-merge { width: 126px; padding-left: 12px; }
.g-align { width: 203px; padding-left: 8px; }
.g-number { width: 146px; padding-left: 8px; }
.g-style { width: 98px; padding-left: 5px; }
.g-calc { width: 107px; padding-left: 12px; }
.g-find { width: 123px; padding-left: 12px; }

.big {
  width: 48px;
  padding-top: 5px;
  display: flex;
  flex-direction: column;
  align-items: center;
  white-space: nowrap;
}

.g-clip .big,
.g-style .big { width: 53px; }
.big svg { margin-bottom: 4px; }
.big .wide { margin-left: 3px; }
.big .caret { margin-top: 6px; }
.g-style .big .caret { margin-top: 1px; }
.g-style .big { display: block; }
.g-style .big svg,
.g-style .big .caret { margin-left: auto; margin-right: auto; }
.g-format .big { width: 50px; }
.big:disabled { color: #bbb; }

.stack {
  display: flex;
  flex-direction: column;
}

.g-clip .stack { padding-left: 3px; }

.small {
  height: 24px;
  display: flex;
  align-items: center;
  gap: 4px;
  white-space: nowrap;
}

.g-merge .small { gap: 5px; }
.small .caret { margin-left: 2px; }

.rows {
  display: flex;
  flex-direction: column;
  gap: 10px;
  padding-top: 7px;
}

.g-style .rows { margin-left: -2px; }

.row {
  display: flex;
  height: 24px;
  align-items: center;
}

.sep {
  width: 1px;
  height: 24px;
  margin: 0 4px;
  background: #d5d5d5;
}

.pick {
  position: relative;
  height: 22px;
  margin-left: 1px;
  border: 1px solid #a8a8a8;
}

.pick select {
  width: 100%;
  height: 20px;
  padding: 0 2px;
  appearance: none;
}

.pick .caret {
  position: absolute;
  width: 6px;
  top: 9px;
  right: 4px;
}

.font-name { width: 158px; color: #000; }
.font-size { width: 45px; }
.number-format { width: 115px; }

.bold { font-weight: 700; font-size: 17px; }
.percent { font-size: 18px; font-weight: 300; }

.decimal {
  flex-direction: column;
  font-size: 11px;
  line-height: 11px;
}

/* Formula bar */
.formula {
  height: 32px;
  flex: none;
  display: flex;
  align-items: center;
  padding: 0 0 2px 13px;
  border-bottom: 1px solid #a8a8a8;
}

.name-box { width: 72px; padding: 0 2px; color: #000; }
.dots { color: #999; width: 8px; text-align: center; }
.formula .dots { margin: 0 15px 0 12px; }
.formula .tool { margin-right: 6px; }

.formula .fx {
  color: #5aa02c;
  font-family: "Noto Sans", sans-serif;
  font-weight: 700;
  font-style: italic;
  font-size: 17px;
}

.formula-input { flex: 1; font-size: 15px; margin-left: 15px; }
.formula-input::placeholder { color: #a0a0a0; }
.formula > .drop:last-child { margin-right: 4px; }

/* Sheet */
.work {
  flex: 1;
  min-height: 0;
  display: flex;
  border-bottom: 1px solid #a8a8a8;
}

.sheet {
  flex: 1;
  min-width: 0;
  overflow: hidden;
  border-right: 1px solid #a8a8a8;
}

.grid {
  width: 1918px;
  table-layout: fixed;
  border-spacing: 0;
  font-family: "Liberation Sans", "Noto Sans CJK KR", sans-serif;
  color: #000;
}

.c-head { width: 34px; }
.c-a { width: 35px; }
.c-s { width: 53px; }
.c-m { width: 72px; }
.c-l { width: 197px; }

.grid tr { height: 19px; }
.grid .h20 { height: 20px; }
.grid .h21 { height: 21px; }
.grid .h22 { height: 22px; }
.grid .h32 { height: 32px; }
.grid .h37 { height: 37px; }
.grid .h65 { height: 65px; }

.grid th,
.grid td {
  padding: 0;
  line-height: 16px;
  text-align: center;
  white-space: nowrap;
}

.grid th {
  font-family: "Noto Sans CJK KR", sans-serif;
  font-size: 14px;
  font-weight: 400;
  color: #555;
  background: #efefef;
  border-right: 1px solid #a8a8a8;
  border-bottom: 1px solid #a8a8a8;
}

.grid thead th { padding-bottom: 2px; }
.grid .sel { background: #e5f8d0; }

.grid .corner {
  background: linear-gradient(135deg, transparent 50%, #d5d5d5 50%) 24px 12px / 7px 7px no-repeat #efefef;
}

.edge { background: #f5f5f5; }

.cursor {
  position: relative;
}

.cursor::before {
  content: "";
  position: absolute;
  inset: -2px;
  border: 2px solid #2b8a45;
}

.cursor::after {
  content: "";
  position: absolute;
  right: -3px;
  bottom: -3px;
  width: 7px;
  height: 7px;
  background: #2b8a45;
  border: solid #fff;
  border-width: 1px 0 0 1px;
}

.grid .title {
  padding: 5px 3px 0 0;
  font-size: 37px;
  line-height: 40px;
  font-weight: 700;
  color: #17375e;
  border-bottom: 2px solid #d9d9d9;
}

.grid .subtitle {
  padding-left: 16px;
  text-align: left;
  font-size: 13px;
  font-weight: 700;
  color: #17375e;
}

.grid .unit {
  padding-right: 3px;
  text-align: right;
  font-size: 11px;
}

.heads td {
  font-size: 12px;
  font-weight: 700;
  color: #fff;
}

.grid .heads td,
.grid .data td { padding-right: 5px; }
.grid .data td { padding-top: 3px; }

.year { background: #595959; }
.co-a { background: #17375e; }
.co-b { background: #31859c; }
.co-c { background: #77933c; }

.data td { font-size: 12px; }
.data td:nth-child(n+4) { border-bottom: 1px dotted #c8c8c8; }
.total td:nth-child(n+4) { border-bottom: 1px solid #a0a0a0; }
.data .key { background: #f0f0f0; }
.data .low { background: #ffc7ce; color: #9c0006; }

.grid .chart-cell { vertical-align: top; }

.chart text {
  font-family: "Noto Sans", sans-serif;
  font-size: 14px;
  fill: #7f7f7f;
}

.axis-y { text-anchor: end; }
.axis-x { text-anchor: middle; }
.chart .axis-x text { font-weight: 700; }

.line-b { border-bottom: 1px solid #000; }
.line-r { border-right: 1px solid #000; }

.best-title,
.cell {
  font-size: 15px;
  border-right: 1px solid #000;
  border-bottom: 1px solid #000;
}

.grid .cell { padding-top: 2px; }

.best-title {
  font-size: 16px;
  background: #eeece1;
}

/* Scroll bars */
.vscroll {
  width: 17px;
  flex: none;
  padding: 2px 2px 3px;
  display: flex;
  flex-direction: column;
  background: #efefef;
}

.vscroll button {
  height: 14px;
  flex: none;
  display: flex;
  align-items: center;
  justify-content: center;
  background: #fff;
}

.vscroll .thumb { flex: 1; }

.thumb {
  background: #fff;
  border: 1px solid #a8a8a8;
}

footer {
  flex: none;
  background: #efefef;
  color: #555;
}

.sheetbar {
  height: 22px;
  display: flex;
  align-items: flex-start;
}

.sheet-nav {
  width: 150px;
  height: 22px;
  padding-left: 3px;
  display: flex;
  align-items: center;
}

.sheet-nav button {
  width: 22px;
  display: flex;
  justify-content: center;
}

.bar {
  width: 1px;
  height: 10px;
  margin: 0 2px;
  background: #aaa;
}

.sheet-tab {
  width: 120px;
  height: 23px;
  margin-top: -1px;
  border: 1px solid #a8a8a8;
  border-top: 0;
  background: #fff;
  color: #4b8522;
  font-size: 12px;
  line-height: 20px;
  text-align: center;
}

.hscroll {
  width: 749px;
  height: 14px;
  margin: 4px 15px 0 auto;
  display: flex;
  align-items: center;
}

.hscroll button {
  width: 19px;
  height: 14px;
  display: flex;
  align-items: center;
  justify-content: center;
  background: #fff;
}

.hscroll .dots { margin-right: 3px; }
.hscroll .thumb { flex: 1; height: 14px; }

.status {
  height: 27px;
  margin-bottom: -8px;
  display: flex;
  align-items: center;
}

.ready { margin: 0 19px 0 9px; }
.saved { margin-left: auto; }

.views {
  display: flex;
  margin: 0 13px;
}

.views button {
  width: 30px;
  height: 18px;
  display: flex;
  align-items: center;
  justify-content: center;
}

.views .on { background: #fff; }
.percent-now { width: 32px; }
.step { width: 8px; margin: 0 4px 0 13px; }
.zoom + .step { margin: 0 4px 0 10px; }

.zoom {
  width: 90px;
  height: 14px;
  margin-left: 6px;
  appearance: none;
}

.zoom::-webkit-slider-runnable-track {
  height: 3px;
  background: #a0a0a0;
}

.zoom::-webkit-slider-thumb {
  appearance: none;
  width: 4px;
  height: 12px;
  margin-top: -5px;
  background: #fff;
  border: 1px solid #888;
}
```
